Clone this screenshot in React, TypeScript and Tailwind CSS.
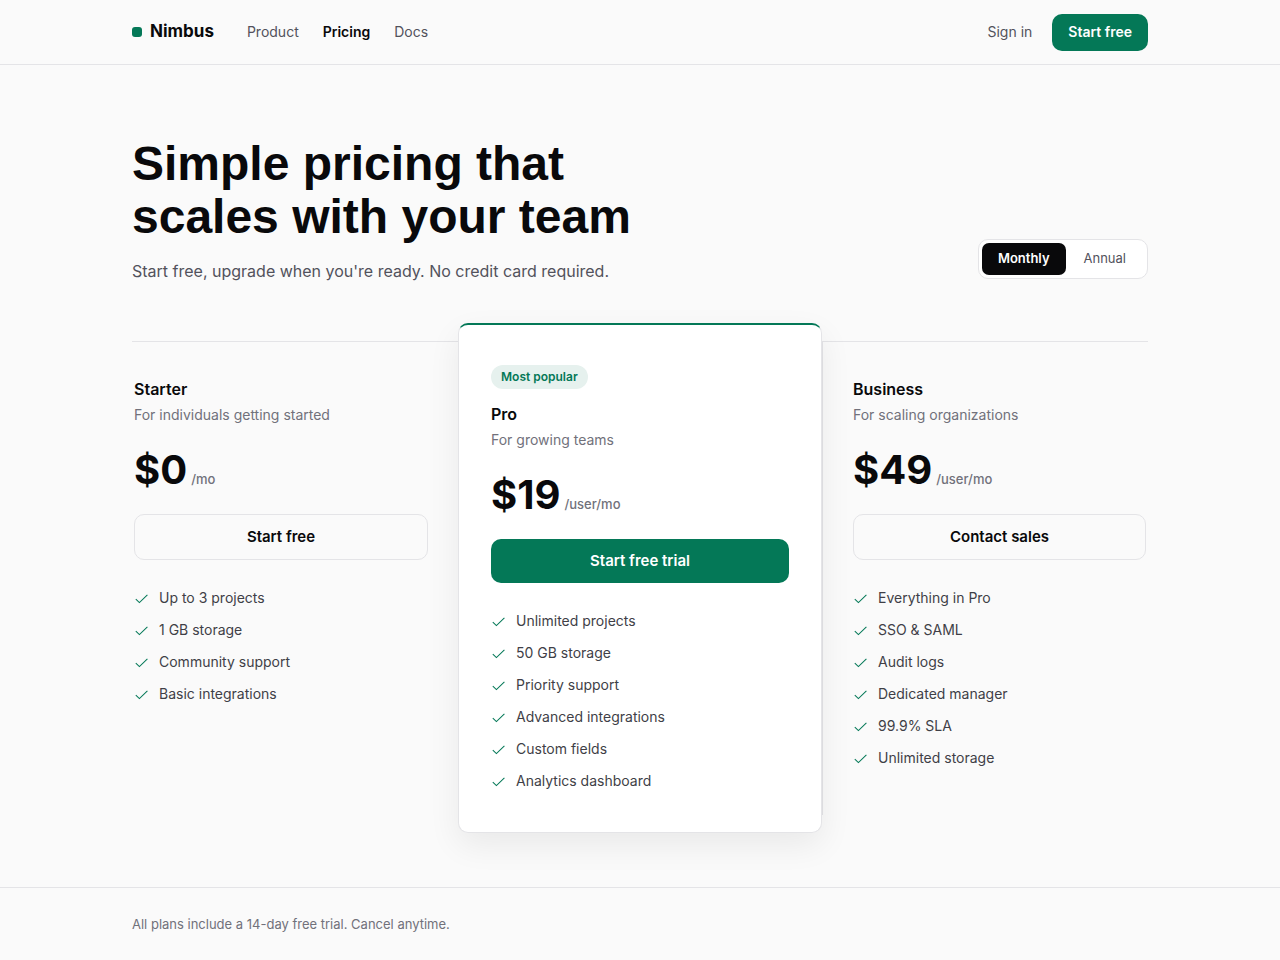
import { useState } from "react";
import clsx from "clsx";

type Plan = {
  name: string;
  blurb: string;
  price: string;
  unit: string;
  cta: string;
  features: string[];
  popular?: boolean;
};

const plans: Plan[] = [
  {
    name: "Starter",
    blurb: "For individuals getting started",
    price: "$0",
    unit: "/mo",
    cta: "Start free",
    features: ["Up to 3 projects", "1 GB storage", "Community support", "Basic integrations"],
  },
  {
    name: "Pro",
    blurb: "For growing teams",
    price: "$19",
    unit: "/user/mo",
    cta: "Start free trial",
    features: ["Unlimited projects", "50 GB storage", "Priority support", "Advanced integrations", "Custom fields", "Analytics dashboard"],
    popular: true,
  },
  {
    name: "Business",
    blurb: "For scaling organizations",
    price: "$49",
    unit: "/user/mo",
    cta: "Contact sales",
    features: ["Everything in Pro", "SSO & SAML", "Audit logs", "Dedicated manager", "99.9% SLA", "Unlimited storage"],
  },
];

const periods = ["Monthly", "Annual"];

function Check() {
  return (
    <svg viewBox="0 0 16 16" className="size-4 shrink-0" fill="none" aria-hidden="true">
      <path d="M1.8 9.2 5.4 12.6 13.4 4.8" stroke="#047857" strokeWidth="1.05" />
    </svg>
  );
}

function Header() {
  return (
    <header className="border-b border-[#e4e4e7]">
      <div className="mx-auto flex h-16 max-w-[1080px] items-center px-8">
        <a href="#" className="flex items-center gap-2 text-[17px] font-bold">
          <span className="size-2.5 rounded-[3px] bg-[#047857]" />
          Nimbus
        </a>
        <nav className="ml-[33px] flex gap-6 text-sm text-zinc-600">
          <a href="#product">Product</a>
          <a href="#pricing" className="font-semibold text-zinc-950">Pricing</a>
          <a href="#docs">Docs</a>
        </nav>
        <div className="ml-auto flex items-center gap-5 text-sm">
          <a href="#signin" className="text-zinc-600">Sign in</a>
          <button type="button" className="h-[37px] rounded-[10px] bg-[#047857] px-4 font-semibold text-white">Start free</button>
        </div>
      </div>
    </header>
  );
}

function PlanColumn({ plan, last }: { plan: Plan; last: boolean }) {
  return (
    <article
      className={clsx(
        plan.popular
          ? "relative z-10 -my-[18px] rounded-[10px] border border-t-2 border-[#e4e4e7] border-t-[#047857] bg-white px-8 pt-10 pb-[41px] shadow-[0_12px_32px_rgba(0,0,0,0.07)]"
          : "border-t border-[#e4e4e7] pt-[35px]",
        !plan.popular && (last ? "border-l pr-0.5 pl-[30px]" : "pr-[30px] pl-0.5"),
      )}
    >
      {plan.popular && (
        <span className="mb-[13px] flex h-6 w-fit items-center rounded-full bg-[#e6f1ee] px-2.5 text-xs font-semibold text-[#047857]">Most popular</span>
      )}
      <h2 className="text-base leading-6 font-semibold">{plan.name}</h2>
      <p className="mt-1 text-sm text-zinc-500">{plan.blurb}</p>
      <p className="mt-[21px] flex items-baseline gap-1">
        <span className="text-[40px] leading-12 font-bold">{plan.price}</span>
        <span className="text-[13px] font-medium text-zinc-500">{plan.unit}</span>
      </p>
      <button
        type="button"
        className={clsx(
          "mt-5 w-full rounded-[10px] text-[15px] font-semibold",
          plan.popular ? "h-11 bg-[#047857] text-white" : "h-[46px] border border-[#e4e4e7]",
        )}
      >
        {plan.cta}
      </button>
      <ul className="mt-7 flex flex-col gap-3 text-sm text-zinc-700">
        {plan.features.map((f) => (
          <li key={f} className="flex items-center gap-[9px]">
            <Check />
            {f}
          </li>
        ))}
      </ul>
    </article>
  );
}

export default function App() {
  const [period, setPeriod] = useState("Monthly");

  return (
    <div className="min-h-screen bg-[#fafafa] font-[Inter,sans-serif] text-zinc-950">
      <Header />

      <main className="mx-auto max-w-[1080px] px-8 py-[72px]">
        <div className="flex items-end justify-between gap-8">
          <div>
            <h1 className="font-['Liberation_Sans',sans-serif] text-[48px] leading-[53px] font-bold">
              Simple pricing that
              <br />
              scales with your team
            </h1>
            <p className="mt-4 text-base leading-6 text-zinc-600">Start free, upgrade when you're ready. No credit card required.</p>
          </div>
          <div role="group" aria-label="Billing period" className="mb-1 flex rounded-[10px] border border-[#e4e4e7] bg-white p-[3px] text-[13px]">
            {periods.map((p) => (
              <button
                key={p}
                type="button"
                aria-pressed={period === p}
                onClick={() => setPeriod(p)}
                className={clsx("h-8 rounded-[7px]", period === p ? "bg-zinc-950 px-4 font-semibold text-white" : "px-[18px] text-zinc-600")}
              >
                {p}
              </button>
            ))}
          </div>
        </div>

        <section aria-label="Plans" className="mt-[58px] grid grid-cols-[163fr_182fr_163fr]">
          {plans.map((plan, i) => (
            <PlanColumn key={plan.name} plan={plan} last={i === plans.length - 1} />
          ))}
        </section>
      </main>

      <footer className="border-t border-[#e4e4e7]">
        <p className="mx-auto max-w-[1080px] px-8 py-[27px] text-[13px] leading-[18px] text-zinc-500">All plans include a 14-day free trial. Cancel anytime.</p>
      </footer>
    </div>
  );
}
